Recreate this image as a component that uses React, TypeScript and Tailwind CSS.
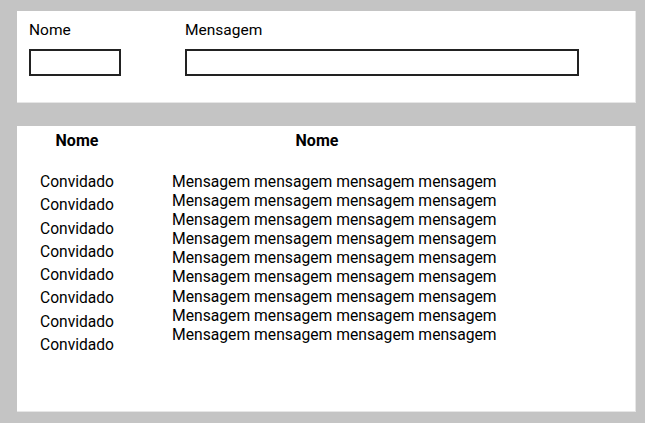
import React from "react";

const guests = Array.from({ length: 8 });
const msgs = Array.from({ length: 9 });

export default function App() {
  return (
    <div
      className="w-[645px] h-[423px] bg-[#c4c4c4] pl-[17px] pr-[9px] pt-[11px] text-black"
      style={{ fontFamily: "Roboto, sans-serif" }}
    >
      <div className="h-[92px] bg-white border-r border-b border-[#e6e6e6] flex pl-[12px] pt-[9px]">
        <div className="flex flex-col w-[156px]">
          <label className="text-[15.5px] leading-[20px]">Nome</label>
          <div className="mt-[9px] w-[92px] h-[27px] border-2 border-[#222]" />
        </div>
        <div className="flex flex-col">
          <label className="text-[15.5px] leading-[20px]">Mensagem</label>
          <div className="mt-[9px] w-[394px] h-[27px] border-2 border-[#222]" />
        </div>
      </div>
      <div className="mt-[23px] h-[286px] bg-white border-r border-b border-[#e6e6e6] pt-0">
        <div className="flex">
          <div className="w-[120px] text-center font-bold text-[16px] leading-[30px]">Nome</div>
          <div className="ml-[35px] w-[290px] text-center font-bold text-[16px] leading-[30px]">Nome</div>
        </div>
        <div className="flex mt-[15px]">
          <div className="w-[120px] flex flex-col items-center">
            {guests.map((_, i) => (
              <div key={i} className="text-[15.6px] leading-[23.3px]">Convidado</div>
            ))}
          </div>
          <div className="ml-[35px] flex flex-col pt-[1px]">
            {msgs.map((_, i) => (
              <div key={i} className="text-[15.7px] leading-[19.1px] whitespace-nowrap">Mensagem mensagem mensagem mensagem</div>
            ))}
          </div>
        </div>
      </div>
    </div>
  );
}
